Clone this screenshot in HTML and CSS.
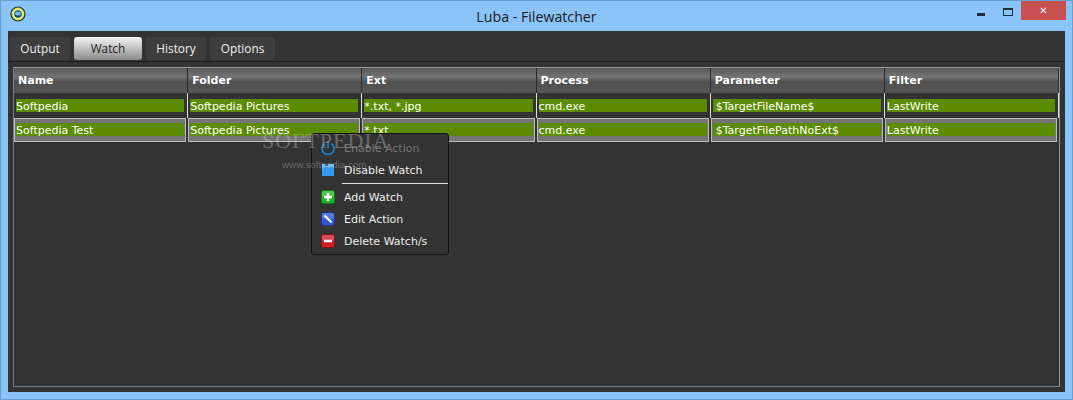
FILE: index.html
```html
<!DOCTYPE html>
<html lang="en">
<head>
    <meta charset="UTF-8">
    <title>Luba - Filewatcher</title>
    <link rel="stylesheet" href="styles.css">
</head>
<body>
    <div class="window">
        <div class="titlebar">
            <svg class="app-icon" width="16" height="16" viewBox="0 0 16 16">
                <circle cx="8" cy="8" r="7.6" fill="#26381a"/>
                <circle cx="8" cy="8" r="6.4" fill="#d8dc58"/>
                <circle cx="8" cy="8" r="4.8" fill="#f2f6d8"/>
                <circle cx="8" cy="8" r="3.8" fill="#124a66"/>
                <ellipse cx="8" cy="7.4" rx="2.8" ry="2" fill="#6cc4e4"/>
            </svg>
            <div class="title">Luba - Filewatcher</div>
            <div class="win-buttons">
                <div class="win-min"></div>
                <div class="win-max"></div>
                <div class="win-close">✕</div>
            </div>
        </div>
        <div class="client">
            <div class="tabs">
                <div class="tab">Output</div>
                <div class="tab active">Watch</div>
                <div class="tab">History</div>
                <div class="tab">Options</div>
            </div>
            <div class="grid">
                <div class="row head">
                    <div class="cell">Name</div>
                    <div class="cell">Folder</div>
                    <div class="cell">Ext</div>
                    <div class="cell">Process</div>
                    <div class="cell">Parameter</div>
                    <div class="cell">Filter</div>
                </div>
                <div class="row item">
                    <div class="cell"><span>Softpedia</span></div>
                    <div class="cell"><span>Softpedia Pictures</span></div>
                    <div class="cell"><span>*.txt, *.jpg</span></div>
                    <div class="cell"><span>cmd.exe</span></div>
                    <div class="cell"><span>$TargetFileName$</span></div>
                    <div class="cell"><span>LastWrite</span></div>
                </div>
                <div class="row item selected">
                    <div class="cell"><span>Softpedia Test</span></div>
                    <div class="cell"><span>Softpedia Pictures</span></div>
                    <div class="cell"><span>*.txt</span></div>
                    <div class="cell"><span>cmd.exe</span></div>
                    <div class="cell"><span>$TargetFilePathNoExt$</span></div>
                    <div class="cell"><span>LastWrite</span></div>
                </div>
            </div>
        </div>

        <div class="menu">
            <div class="menu-item disabled">
                <svg width="16" height="16" viewBox="0 0 16 16" fill="none" stroke="#1f86d6" stroke-width="1.6">
                    <path d="M4.6 3.6a6 6 0 1 0 6.8 0"/>
                    <path d="M8 1v7"/>
                </svg>
                Enable Action
            </div>
            <div class="menu-item">
                <svg width="16" height="16" viewBox="0 0 16 16">
                    <rect x="2" y="2" width="12" height="12" fill="#2f9cf0"/>
                    <rect x="2" y="2" width="12" height="3" fill="#6cbcf5"/>
                    <rect x="5" y="2" width="3" height="2" fill="#1c5f94"/>
                </svg>
                Disable Watch
            </div>
            <div class="menu-sep"></div>
            <div class="menu-item">
                <svg width="16" height="16" viewBox="0 0 16 16">
                    <rect x="1.5" y="1.5" width="13" height="13" rx="2" fill="#1fb52c" stroke="#0f7a18"/>
                    <rect x="2" y="2" width="12" height="6" rx="1.5" fill="#fff" opacity="0.2"/>
                    <path d="M8 4v8M4 8h8" stroke="#fff" stroke-width="2.4"/>
                </svg>
                Add Watch
            </div>
            <div class="menu-item">
                <svg width="16" height="16" viewBox="0 0 16 16">
                    <rect x="1.5" y="1.5" width="13" height="13" rx="2" fill="#2f55cf" stroke="#1c3590"/>
                    <rect x="2" y="2" width="12" height="6" rx="1.5" fill="#fff" opacity="0.2"/>
                    <path d="M4.5 4.5l7 7" stroke="#fff" stroke-width="2"/>
                </svg>
                Edit Action
            </div>
            <div class="menu-item">
                <svg width="16" height="16" viewBox="0 0 16 16">
                    <rect x="1.5" y="1.5" width="13" height="13" rx="2" fill="#cf1f26" stroke="#8a1015"/>
                    <rect x="2" y="2" width="12" height="6" rx="1.5" fill="#fff" opacity="0.2"/>
                    <path d="M4 8h8" stroke="#fff" stroke-width="2.4"/>
                </svg>
                Delete Watch/s
            </div>
        </div>

        <div class="mark">
            <div class="mark-big">SOFTPEDIA</div>
            <div class="mark-small">www.softpedia.com</div>
        </div>
    </div>
</body>
</html>
```

FILE: styles.css
```css
* {
    box-sizing: border-box;
}
html, body {
    margin: 0;
    height: 100%;
}
body {
    overflow: hidden;
    background: #8ac4f8;
}
.window {
    position: relative;
    width: 1073px;
    height: 400px;
    padding: 0 8px 8px 8px;
    display: flex;
    flex-direction: column;
    background: #8ac4f8;
    box-shadow: inset 0 0 0 1px #6d9fce;
    font-family: "DejaVu Sans", sans-serif;
}
.titlebar {
    height: 31px;
    flex: none;
    margin: 0 -8px;
    padding-left: 10px;
    display: flex;
    align-items: center;
    position: relative;
}
.app-icon {
    margin-top: -3px;
}
.title {
    position: absolute;
    left: 0;
    right: 0;
    top: 7px;
    text-align: center;
    font: 14.2px "Open Sans", sans-serif;
    color: #1a1a1a;
}
.win-buttons {
    position: absolute;
    right: 7px;
    top: 1px;
    height: 19px;
    display: flex;
    align-items: flex-start;
}
.win-min {
    width: 8px;
    height: 3px;
    margin: 12px 18px 0 0;
    background: #20303c;
}
.win-max {
    width: 10px;
    height: 8px;
    margin: 7px 8px 0 0;
    border: 1px solid #20303c;
    border-top-width: 2px;
}
.win-close {
    width: 45px;
    height: 19px;
    background: #c75050;
    color: #fff;
    font: bold 10px/20px "DejaVu Sans", sans-serif;
    text-align: center;
}
.client {
    flex: 1;
    display: flex;
    flex-direction: column;
    background: #333;
}
.tabs {
    height: 31px;
    flex: none;
    padding: 6px 0 0 2px;
    display: flex;
    gap: 4px;
    border-bottom: 1px solid #1f1f1f;
}
.tab {
    height: 23px;
    width: 60px;
    text-align: center;
    font: 11.8px/23px "Open Sans", sans-serif;
    color: #eee;
    background: #3d3d3d;
    border-radius: 3px;
}
.tab:nth-child(2) {
    width: 68px;
}
.tab:nth-child(4) {
    width: 65px;
}
.tab.active {
    color: #222;
    background: linear-gradient(#f4f4f4, #8c8c8c);
}
.grid {
    flex: 1;
    margin: 5px;
    border: 1px solid #6f7f8c;
    border-top-color: #999;
    border-right-color: #8a9aa6;
}
.row {
    display: flex;
}
.cell {
    flex: 1 1 0;
    font-size: 11px;
    color: #fff;
}
.head {
    height: 25px;
}
.head .cell {
    padding-left: 4px;
    font-weight: bold;
    line-height: 26px;
    background: linear-gradient(#585858, #747474 35%, #505050 55%, #555);
    border-right: 1px solid #2a2a2a;
}
.item {
    height: 25px;
}
.item .cell {
    padding: 6px 3px 6px 2px;
    border-right: 1px solid #ddd;
}
.item .cell span {
    display: block;
    height: 13px;
    line-height: 15px;
    background: #5b8c00;
    white-space: nowrap;
}
.item .cell:nth-child(5) span {
    padding-left: 3px;
}
.item.selected {
    height: 24px;
}
.item.selected .cell {
    margin-right: 2px;
    padding: 4px 1px 5px 1px;
    background: #757575;
    border: 1px solid #bbb;
}
.menu {
    position: absolute;
    left: 311px;
    top: 133px;
    width: 138px;
    height: 122px;
    padding-top: 3px;
    background: #333;
    border: 1px solid #111;
    border-radius: 3px;
    font-size: 11px;
    color: #eee;
}
.menu-item {
    height: 22px;
    padding-left: 8px;
    display: flex;
    align-items: center;
    gap: 8px;
}
.menu-item.disabled {
    color: #777;
}
.menu-sep {
    height: 1px;
    margin: 2px 0 2px 30px;
    background: #ddd;
}
.mark {
    position: absolute;
    left: 262px;
    top: 129px;
    color: rgba(200, 200, 200, 0.38);
    pointer-events: none;
}
.mark-big {
    font: 22px/24px "Liberation Serif", serif;
    letter-spacing: 1px;
}
.mark-small {
    margin: 6px 0 0 20px;
    font: 9.8px/12px "Liberation Sans", sans-serif;
}
```
